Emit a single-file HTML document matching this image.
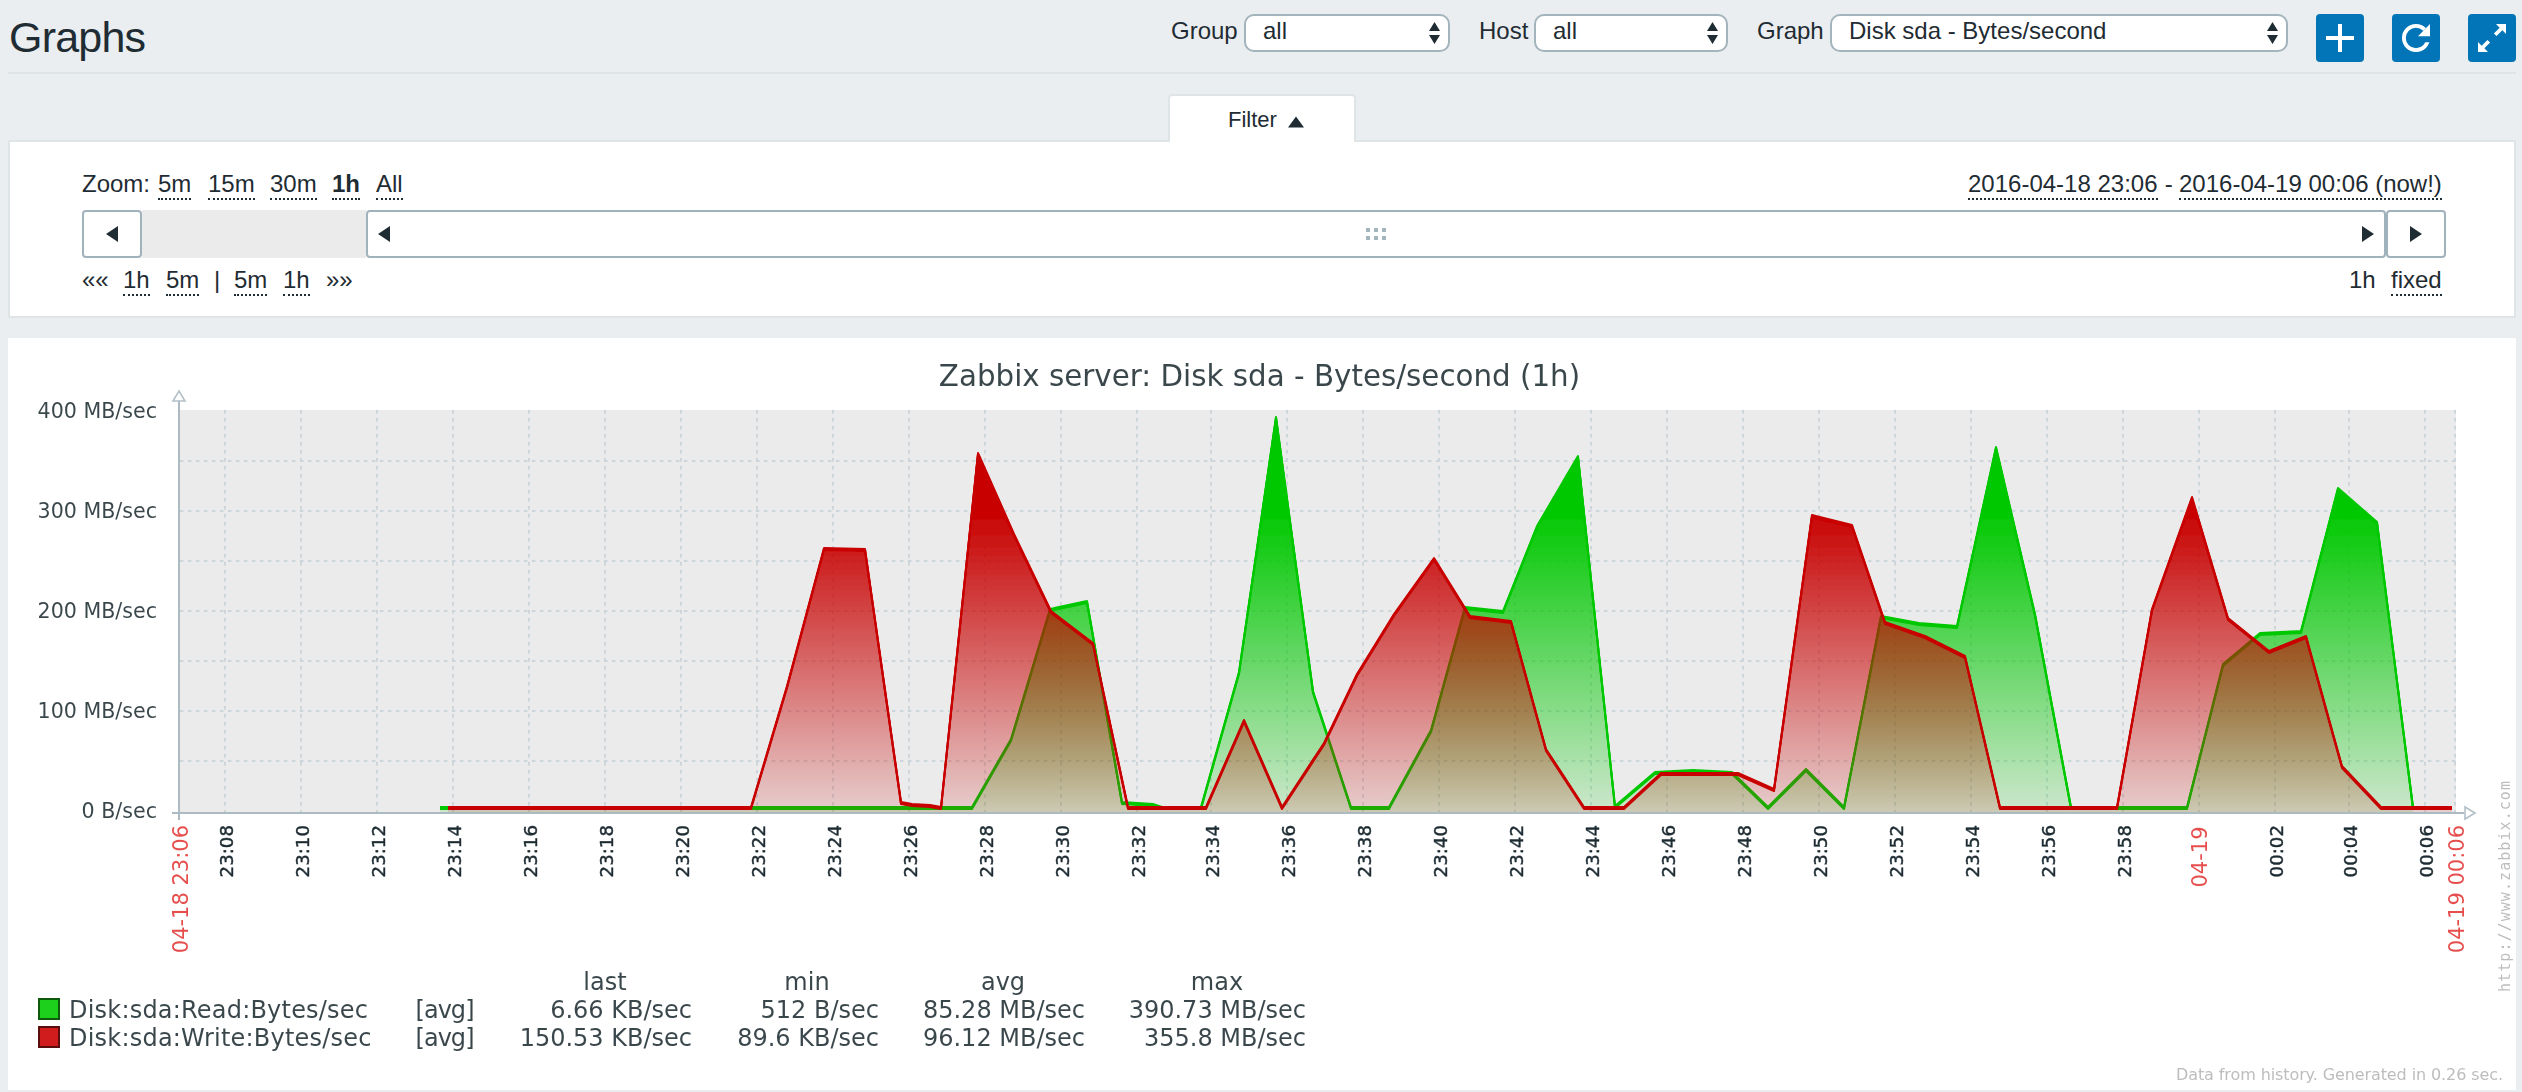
<!DOCTYPE html>
<html lang="en"><head><meta charset="utf-8"><title>Graphs</title>
<style>
html,body{margin:0;padding:0}
body{width:2522px;height:1092px;position:relative;overflow:hidden;background:#EBEEF0;color:#1F2C33;font-family:"Liberation Sans",sans-serif;font-size:24px;line-height:28px}
.a{position:absolute;white-space:nowrap}
h1{position:absolute;left:9px;top:11px;margin:0;font-size:43px;line-height:52px;font-weight:normal;letter-spacing:-0.8px}
.hr{position:absolute;left:8px;top:72px;width:2508px;height:2px;background:#DFE4E7}
.lbl{position:absolute;top:17px;line-height:28px}
.sel{position:absolute;top:14px;height:38px;box-sizing:border-box;border:2px solid #A3B4BD;border-radius:10px;background:#fff;line-height:34px}
.sel span{position:absolute;left:17px;top:-2px}
.btn{position:absolute;top:14px;width:48px;height:48px;border-radius:4px;background:#0275B8}
.tab{position:absolute;left:1168px;top:94px;width:184px;height:46px;border:2px solid #DFE4E7;border-bottom:none;border-radius:4px 4px 0 0;background:#fff;font-size:22px}
.filter{position:absolute;left:8px;top:140px;width:2504px;height:174px;border:2px solid #DFE4E7;background:#fff}
.lnk{border-bottom:2px dotted #1F2C33;padding-bottom:0}
.row{position:absolute;white-space:nowrap;line-height:28px;height:28px}
.row span{position:absolute;top:0;line-height:24px;height:26px}
.sb{position:absolute;top:210px;height:44px;border:2px solid #A0B2BC;border-radius:4px;background:#fff}
</style></head><body>
<h1>Graphs</h1>
<div class="hr"></div>
<div class="lbl" style="left:1171px">Group</div><div class="sel" style="left:1244px;width:206px"><span>all</span><svg width="12" height="24" viewBox="0 0 12 24" style="position:absolute;right:7px;top:6px"><path d="M0,9H11L5.5,0Z M0,13H11L5.5,22Z" fill="#1F2C33"/></svg></div>
<div class="lbl" style="left:1479px">Host</div><div class="sel" style="left:1534px;width:194px"><span>all</span><svg width="12" height="24" viewBox="0 0 12 24" style="position:absolute;right:7px;top:6px"><path d="M0,9H11L5.5,0Z M0,13H11L5.5,22Z" fill="#1F2C33"/></svg></div>
<div class="lbl" style="left:1757px">Graph</div><div class="sel" style="left:1830px;width:458px"><span>Disk sda - Bytes/second</span><svg width="12" height="24" viewBox="0 0 12 24" style="position:absolute;right:7px;top:6px"><path d="M0,9H11L5.5,0Z M0,13H11L5.5,22Z" fill="#1F2C33"/></svg></div>
<div class="btn" style="left:2316px"><svg width="48" height="48" viewBox="0 0 48 48"><path d="M10,22H38V26H10Z M22,10H26V38H22Z" fill="#fff"/></svg></div>
<div class="btn" style="left:2392px"><svg width="48" height="48" viewBox="0 0 48 48"><defs><clipPath id="rc"><path clip-rule="evenodd" d="M0,0H48V48H0Z M26,22.3L38,10H48V28.2H30Z"/></clipPath></defs><circle cx="24" cy="24" r="12.1" fill="none" stroke="#fff" stroke-width="3.8" clip-path="url(#rc)"/><path d="M38,10V22.3H26Z" fill="#fff"/></svg></div>
<div class="btn" style="left:2468px"><svg width="48" height="48" viewBox="0 0 48 48"><path d="M28,10H38V20L34.35,16.35L28.55,22.1L25.85,19.4L31.65,13.65Z" fill="#fff"/><path transform="rotate(180 24 24)" d="M28,10H38V20L34.35,16.35L28.55,22.1L25.85,19.4L31.65,13.65Z" fill="#fff"/></svg></div>
<div class="filter"></div>
<div class="tab"><span class="a" style="left:58px;top:10px;line-height:28px">Filter</span><svg class="a" style="left:117px;top:20px" width="18" height="12" viewBox="0 0 18 12"><path d="M1,11.5H17L9,0.5Z" fill="#1F2C33"/></svg></div>
<div class="row" style="left:0;top:172px">
<span style="left:82px">Zoom:</span><span class="lnk" style="left:158px">5m</span><span class="lnk" style="left:208px">15m</span><span class="lnk" style="left:270px">30m</span><span class="lnk" style="left:332px;font-weight:bold">1h</span><span class="lnk" style="left:376px">All</span>
<span class="lnk" style="left:1968px">2016-04-18 23:06</span><span style="left:2158px">&nbsp;-&nbsp;</span><span class="lnk" style="left:2179px">2016-04-19 00:06 (now!)</span>
</div>
<div class="a" style="left:142px;top:210px;width:224px;height:48px;background:#EBEBEB"></div>
<div class="sb" style="left:82px;width:56px"><svg class="a" style="left:22px;top:14px" width="12" height="16"><path d="M12,0V16L0,8Z" fill="#1F2C33"/></svg></div>
<div class="sb" style="left:366px;width:2016px"><svg class="a" style="left:10px;top:14px" width="12" height="16"><path d="M12,0V16L0,8Z" fill="#1F2C33"/></svg>
<svg class="a" style="left:998px;top:16px" width="20" height="12"><path d="M0,0h4v4h-4zM8,0h4v4h-4zM16,0h4v4h-4zM0,8h4v4h-4zM8,8h4v4h-4zM16,8h4v4h-4z" fill="#A5B5BD"/></svg>
<svg class="a" style="left:1994px;top:14px" width="12" height="16"><path d="M0,0V16L12,8Z" fill="#1F2C33"/></svg></div>
<div class="sb" style="left:2386px;width:56px"><svg class="a" style="left:22px;top:14px" width="12" height="16"><path d="M0,0V16L12,8Z" fill="#1F2C33"/></svg></div>
<div class="row" style="left:0;top:268px">
<span style="left:82px">&laquo;&laquo;</span><span class="lnk" style="left:123px">1h</span><span class="lnk" style="left:166px">5m</span><span style="left:214px">|</span><span class="lnk" style="left:234px">5m</span><span class="lnk" style="left:283px">1h</span><span style="left:326px">&raquo;&raquo;</span>
<span style="left:2349px">1h</span><span class="lnk" style="left:2391px">fixed</span>
</div>
<svg id="graph" width="2508" height="752" viewBox="8 338 2508 752" style="position:absolute;left:8px;top:338px" font-family="'DejaVu Sans', sans-serif">
<defs>
<linearGradient id="gG" gradientUnits="userSpaceOnUse" x1="0" y1="410" x2="0" y2="810"><stop offset="0" stop-color="#00C800" stop-opacity="1"/><stop offset="0.25" stop-color="#00C800" stop-opacity="1"/><stop offset="1" stop-color="#00C800" stop-opacity="0.134"/></linearGradient>
<linearGradient id="gR" gradientUnits="userSpaceOnUse" x1="0" y1="410" x2="0" y2="810"><stop offset="0" stop-color="#C80000" stop-opacity="1"/><stop offset="0.25" stop-color="#C80000" stop-opacity="1"/><stop offset="1" stop-color="#C80000" stop-opacity="0.134"/></linearGradient>
<filter id="soft" filterUnits="userSpaceOnUse" x="8" y="338" width="2508" height="752"><feGaussianBlur stdDeviation="0.7"/></filter>
</defs>
<rect x="8" y="338" width="2508" height="752" fill="#FFFFFF"/>
<g filter="url(#soft)"><style>#graph text{fill-opacity:.88}#graph text.xl{fill-opacity:1;stroke:#1F2C33;stroke-width:.45px}</style>
<text x="1259.5" y="386" text-anchor="middle" font-size="29.33" fill="#1F2C33">Zabbix server: Disk sda - Bytes/second (1h)</text>
<rect x="180" y="410" width="2276" height="402" fill="#EBEBEB"/>
<path d="M225.0,410V812M301.0,410V812M377.0,410V812M453.0,410V812M529.0,410V812M605.0,410V812M681.0,410V812M757.0,410V812M833.0,410V812M909.0,410V812M985.0,410V812M1061.0,410V812M1137.0,410V812M1211.0,410V812M1287.0,410V812M1363.0,410V812M1439.0,410V812M1515.0,410V812M1591.0,410V812M1667.0,410V812M1743.0,410V812M1819.0,410V812M1895.0,410V812M1971.0,410V812M2047.0,410V812M2123.0,410V812M2199.0,410V812M2275.0,410V812M2349.0,410V812M2425.0,410V812M180,461H2456M180,511H2456M180,561H2456M180,611H2456M180,661H2456M180,711H2456M180,761H2456M2455,410V812" stroke="#CCD5D9" stroke-width="2" stroke-dasharray="3.4 4.6" fill="none"/>
<polygon points="440,812 440,808 972,808 1011,740 1050,610 1087,602 1122,803 1153,805 1162,808 1201,808 1239,673 1276,418 1313,692 1351,808 1389,808 1431,731 1465,608 1503,612 1537,527 1578,457 1615,807 1655,773 1693,771 1732,773 1768,808 1806,770 1844,808 1881,617 1919,624 1957,627 1996,448 2035,615 2071,808 2187,808 2223,665 2260,634 2301,632 2338,489 2377,523 2413,808 2413,812" fill="url(#gG)"/>
<g fill="none" stroke="#00C800" stroke-width="2" stroke-linejoin="round"><polyline points="440,807 972,807 1011,739 1050,609 1087,601 1122,802 1153,804 1162,807 1201,807 1239,672 1276,417 1313,691 1351,807 1389,807 1431,730 1465,607 1503,611 1537,526 1578,456 1615,806 1655,772 1693,770 1732,772 1768,807 1806,769 1844,807 1881,616 1919,623 1957,626 1996,447 2035,614 2071,807 2187,807 2223,664 2260,633 2301,631 2338,488 2377,522 2413,807"/><polyline points="440,808 972,808 1011,740 1050,610 1087,602 1122,803 1153,805 1162,808 1201,808 1239,673 1276,418 1313,692 1351,808 1389,808 1431,731 1465,608 1503,612 1537,527 1578,457 1615,807 1655,773 1693,771 1732,773 1768,808 1806,770 1844,808 1881,617 1919,624 1957,627 1996,448 2035,615 2071,808 2187,808 2223,665 2260,634 2301,632 2338,489 2377,523 2413,808"/><polyline points="440,809 972,809 1011,741 1050,611 1087,603 1122,804 1153,806 1162,809 1201,809 1239,674 1276,419 1313,693 1351,809 1389,809 1431,732 1465,609 1503,613 1537,528 1578,458 1615,808 1655,774 1693,772 1732,774 1768,809 1806,771 1844,809 1881,618 1919,625 1957,628 1996,449 2035,616 2071,809 2187,809 2223,666 2260,635 2301,633 2338,490 2377,524 2413,809"/></g>
<polygon points="448,812 448,808 751,808 787,687 824,549 865,550 901,803 912,805 930,806 941,808 978,454 1014,535 1051,612 1093,644 1128,808 1206,808 1244,721 1282,808 1324,744 1357,675 1394,615 1434,559 1470,617 1511,622 1546,750 1584,808 1624,808 1661,774 1738,774 1774,790 1812,516 1852,526 1885,623 1925,637 1965,657 2000,808 2117,808 2152,610 2192,498 2228,619 2269,652 2306,637 2342,767 2381,808 2452,808 2452,812" fill="url(#gR)"/>
<g fill="none" stroke="#C80000" stroke-width="2" stroke-linejoin="round"><polyline points="448,807 751,807 787,686 824,548 865,549 901,802 912,804 930,805 941,807 978,453 1014,534 1051,611 1093,643 1128,807 1206,807 1244,720 1282,807 1324,743 1357,674 1394,614 1434,558 1470,616 1511,621 1546,749 1584,807 1624,807 1661,773 1738,773 1774,789 1812,515 1852,525 1885,622 1925,636 1965,656 2000,807 2117,807 2152,609 2192,497 2228,618 2269,651 2306,636 2342,766 2381,807 2452,807"/><polyline points="448,808 751,808 787,687 824,549 865,550 901,803 912,805 930,806 941,808 978,454 1014,535 1051,612 1093,644 1128,808 1206,808 1244,721 1282,808 1324,744 1357,675 1394,615 1434,559 1470,617 1511,622 1546,750 1584,808 1624,808 1661,774 1738,774 1774,790 1812,516 1852,526 1885,623 1925,637 1965,657 2000,808 2117,808 2152,610 2192,498 2228,619 2269,652 2306,637 2342,767 2381,808 2452,808"/><polyline points="448,809 751,809 787,688 824,550 865,551 901,804 912,806 930,807 941,809 978,455 1014,536 1051,613 1093,645 1128,809 1206,809 1244,722 1282,809 1324,745 1357,676 1394,616 1434,560 1470,618 1511,623 1546,751 1584,809 1624,809 1661,775 1738,775 1774,791 1812,517 1852,527 1885,624 1925,638 1965,658 2000,809 2117,809 2152,611 2192,499 2228,620 2269,653 2306,638 2342,768 2381,809 2452,809"/></g>
<path d="M179,400V820M172,813H2464" stroke="#ACBBC2" stroke-width="2" fill="none"/>
<path d="M173,401H185L179,391Z M2465,807V819L2475,813Z" fill="#FFFFFF" stroke="#B3C0C7" stroke-width="1.6" stroke-linejoin="miter"/>
<text x="157" y="418" text-anchor="end" font-size="20.6" fill="#1F2C33">400 MB/sec</text>
<text x="157" y="518" text-anchor="end" font-size="20.6" fill="#1F2C33">300 MB/sec</text>
<text x="157" y="618" text-anchor="end" font-size="20.6" fill="#1F2C33">200 MB/sec</text>
<text x="157" y="718" text-anchor="end" font-size="20.6" fill="#1F2C33">100 MB/sec</text>
<text x="157" y="818" text-anchor="end" font-size="20.6" fill="#1F2C33">0 B/sec</text>
<text transform="translate(233.0,825) rotate(-90)" text-anchor="end" font-size="18.2" fill="#1F2C33" class="xl">23:08</text>
<text transform="translate(309.0,825) rotate(-90)" text-anchor="end" font-size="18.2" fill="#1F2C33" class="xl">23:10</text>
<text transform="translate(385.0,825) rotate(-90)" text-anchor="end" font-size="18.2" fill="#1F2C33" class="xl">23:12</text>
<text transform="translate(461.0,825) rotate(-90)" text-anchor="end" font-size="18.2" fill="#1F2C33" class="xl">23:14</text>
<text transform="translate(537.0,825) rotate(-90)" text-anchor="end" font-size="18.2" fill="#1F2C33" class="xl">23:16</text>
<text transform="translate(613.0,825) rotate(-90)" text-anchor="end" font-size="18.2" fill="#1F2C33" class="xl">23:18</text>
<text transform="translate(689.0,825) rotate(-90)" text-anchor="end" font-size="18.2" fill="#1F2C33" class="xl">23:20</text>
<text transform="translate(765.0,825) rotate(-90)" text-anchor="end" font-size="18.2" fill="#1F2C33" class="xl">23:22</text>
<text transform="translate(841.0,825) rotate(-90)" text-anchor="end" font-size="18.2" fill="#1F2C33" class="xl">23:24</text>
<text transform="translate(917.0,825) rotate(-90)" text-anchor="end" font-size="18.2" fill="#1F2C33" class="xl">23:26</text>
<text transform="translate(993.0,825) rotate(-90)" text-anchor="end" font-size="18.2" fill="#1F2C33" class="xl">23:28</text>
<text transform="translate(1069.0,825) rotate(-90)" text-anchor="end" font-size="18.2" fill="#1F2C33" class="xl">23:30</text>
<text transform="translate(1145.0,825) rotate(-90)" text-anchor="end" font-size="18.2" fill="#1F2C33" class="xl">23:32</text>
<text transform="translate(1219.0,825) rotate(-90)" text-anchor="end" font-size="18.2" fill="#1F2C33" class="xl">23:34</text>
<text transform="translate(1295.0,825) rotate(-90)" text-anchor="end" font-size="18.2" fill="#1F2C33" class="xl">23:36</text>
<text transform="translate(1371.0,825) rotate(-90)" text-anchor="end" font-size="18.2" fill="#1F2C33" class="xl">23:38</text>
<text transform="translate(1447.0,825) rotate(-90)" text-anchor="end" font-size="18.2" fill="#1F2C33" class="xl">23:40</text>
<text transform="translate(1523.0,825) rotate(-90)" text-anchor="end" font-size="18.2" fill="#1F2C33" class="xl">23:42</text>
<text transform="translate(1599.0,825) rotate(-90)" text-anchor="end" font-size="18.2" fill="#1F2C33" class="xl">23:44</text>
<text transform="translate(1675.0,825) rotate(-90)" text-anchor="end" font-size="18.2" fill="#1F2C33" class="xl">23:46</text>
<text transform="translate(1751.0,825) rotate(-90)" text-anchor="end" font-size="18.2" fill="#1F2C33" class="xl">23:48</text>
<text transform="translate(1827.0,825) rotate(-90)" text-anchor="end" font-size="18.2" fill="#1F2C33" class="xl">23:50</text>
<text transform="translate(1903.0,825) rotate(-90)" text-anchor="end" font-size="18.2" fill="#1F2C33" class="xl">23:52</text>
<text transform="translate(1979.0,825) rotate(-90)" text-anchor="end" font-size="18.2" fill="#1F2C33" class="xl">23:54</text>
<text transform="translate(2055.0,825) rotate(-90)" text-anchor="end" font-size="18.2" fill="#1F2C33" class="xl">23:56</text>
<text transform="translate(2131.0,825) rotate(-90)" text-anchor="end" font-size="18.2" fill="#1F2C33" class="xl">23:58</text>
<text transform="translate(2206.5,826.5) rotate(-90)" text-anchor="end" font-size="21" fill="#E33734">04-19</text>
<text transform="translate(2283.0,825) rotate(-90)" text-anchor="end" font-size="18.2" fill="#1F2C33" class="xl">00:02</text>
<text transform="translate(2357.0,825) rotate(-90)" text-anchor="end" font-size="18.2" fill="#1F2C33" class="xl">00:04</text>
<text transform="translate(2433.0,825) rotate(-90)" text-anchor="end" font-size="18.2" fill="#1F2C33" class="xl">00:06</text>
<text transform="translate(188,825) rotate(-90)" text-anchor="end" font-size="21" fill="#E33734">04-18 23:06</text>
<text transform="translate(2464,825) rotate(-90)" text-anchor="end" font-size="21" fill="#E33734">04-19 00:06</text>
<text transform="translate(2510,992) rotate(-90)" font-family="'DejaVu Sans Mono', monospace" font-size="15" fill="#B4B4B4" textLength="211">http://www.zabbix.com</text>
<rect x="39" y="999" width="20" height="20" fill="#1FD01F" stroke="#0A5A0A" stroke-width="2"/>
<rect x="39" y="1027" width="20" height="20" fill="#D01F1F" stroke="#5A0A0A" stroke-width="2"/>
<text x="69" y="1017.5" text-anchor="start" font-size="24" fill="#1F2C33" textLength="299">Disk:sda:Read:Bytes/sec</text>
<text x="69" y="1045.5" text-anchor="start" font-size="24" fill="#1F2C33" textLength="302.5">Disk:sda:Write:Bytes/sec</text>
<text x="415.5" y="1017.5" text-anchor="start" font-size="24" fill="#1F2C33" textLength="59">[avg]</text>
<text x="415.5" y="1045.5" text-anchor="start" font-size="24" fill="#1F2C33" textLength="59">[avg]</text>
<text x="605" y="989.5" text-anchor="middle" font-size="24" fill="#1F2C33">last</text>
<text x="807" y="989.5" text-anchor="middle" font-size="24" fill="#1F2C33">min</text>
<text x="1003" y="989.5" text-anchor="middle" font-size="24" fill="#1F2C33">avg</text>
<text x="1217" y="989.5" text-anchor="middle" font-size="24" fill="#1F2C33">max</text>
<text x="692" y="1017.5" text-anchor="end" font-size="24" fill="#1F2C33">6.66 KB/sec</text>
<text x="692" y="1045.5" text-anchor="end" font-size="24" fill="#1F2C33">150.53 KB/sec</text>
<text x="879" y="1017.5" text-anchor="end" font-size="24" fill="#1F2C33">512 B/sec</text>
<text x="879" y="1045.5" text-anchor="end" font-size="24" fill="#1F2C33">89.6 KB/sec</text>
<text x="1085" y="1017.5" text-anchor="end" font-size="24" fill="#1F2C33">85.28 MB/sec</text>
<text x="1085" y="1045.5" text-anchor="end" font-size="24" fill="#1F2C33">96.12 MB/sec</text>
<text x="1306" y="1017.5" text-anchor="end" font-size="24" fill="#1F2C33">390.73 MB/sec</text>
<text x="1306" y="1045.5" text-anchor="end" font-size="24" fill="#1F2C33">355.8 MB/sec</text>
<text x="2503" y="1080" text-anchor="end" font-size="16" fill="#B4B4B4" textLength="327">Data from history. Generated in 0.26 sec.</text>
</g>
</svg>
</body></html>
